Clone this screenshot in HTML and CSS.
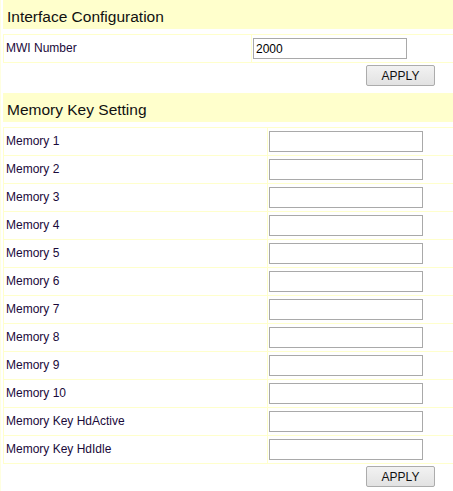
FILE: index.html
```html
<!DOCTYPE html>
<html>
<head>
<meta charset="utf-8">
<link rel="stylesheet" href="styles.css">
</head>
<body>
<div class="page">
  <div class="section-title">Interface Configuration</div>
  <div class="table t1">
    <div class="row">
      <div class="label">MWI Number</div>
      <div class="field"><input class="text" type="text" value="2000"></div>
    </div>
  </div>
  <div class="actions"><button class="btn">APPLY</button></div>

  <div class="section-title s2">Memory Key Setting</div>
  <div class="table t2">
    <div class="row"><div class="label">Memory 1</div><div class="field"><input class="text" type="text"></div></div>
    <div class="row"><div class="label">Memory 2</div><div class="field"><input class="text" type="text"></div></div>
    <div class="row"><div class="label">Memory 3</div><div class="field"><input class="text" type="text"></div></div>
    <div class="row"><div class="label">Memory 4</div><div class="field"><input class="text" type="text"></div></div>
    <div class="row"><div class="label">Memory 5</div><div class="field"><input class="text" type="text"></div></div>
    <div class="row"><div class="label">Memory 6</div><div class="field"><input class="text" type="text"></div></div>
    <div class="row"><div class="label">Memory 7</div><div class="field"><input class="text" type="text"></div></div>
    <div class="row"><div class="label">Memory 8</div><div class="field"><input class="text" type="text"></div></div>
    <div class="row"><div class="label">Memory 9</div><div class="field"><input class="text" type="text"></div></div>
    <div class="row"><div class="label">Memory 10</div><div class="field"><input class="text" type="text"></div></div>
    <div class="row"><div class="label">Memory Key HdActive</div><div class="field"><input class="text" type="text"></div></div>
    <div class="row"><div class="label">Memory Key HdIdle</div><div class="field"><input class="text" type="text"></div></div>
  </div>
  <div class="actions"><button class="btn">APPLY</button></div>
</div>
</body>
</html>
```
FILE: styles.css
```css
html, body {
  margin: 0;
  padding: 0;
  background: #ffffff;
}
body {
  font-family: "Liberation Sans", Arial, sans-serif;
  color: #000;
}
.page {
  border-left: 1px solid #ffffe0;
  padding-left: 2px;
  min-height: 491px;
  box-sizing: border-box;
}
.section-title {
  background: #ffffcc;
  height: 29px;
  line-height: 34px;
  padding-left: 4px;
  font-size: 15.5px;
  color: #111;
  margin-bottom: 5px;
}
.section-title.s2 {
  margin-top: 7px;
}
.table {
  border-top: 1px solid #ffffcc;
  border-left: 1px solid #ffffcc;
}
.row {
  display: grid;
  height: 28px;
  box-sizing: border-box;
  border-bottom: 1px solid #ffffcc;
}
.t1 .row {
  grid-template-columns: 248px 1fr;
}
.t2 .row {
  grid-template-columns: 264px 1fr;
}
.label {
  border-right: 1px solid #ffffcc;
  font-size: 12px;
  line-height: 26px;
  padding-left: 2px;
  color: #1a0a3a;
}
.field {
  display: flex;
  align-items: center;
  padding-left: 1px;
}
.text {
  width: 154px;
  height: 21px;
  box-sizing: border-box;
  border: 1px solid #a9a9a9;
  padding: 1px 2px;
  margin: 0;
  font-family: "Liberation Sans", Arial, sans-serif;
  font-size: 12px;
  color: #000;
  background: #fff;
  outline: none;
}
.actions {
  display: flex;
  justify-content: flex-end;
  padding-right: 18px;
  padding-top: 2px;
}
.btn {
  width: 69px;
  height: 21px;
  margin: 0;
  padding: 0;
  font-family: "Liberation Sans", Arial, sans-serif;
  font-size: 12px;
  color: #111;
  border: 1px solid #acacac;
  border-radius: 2px;
  background: linear-gradient(#f2f2f2, #e2e2e2);
}
```
